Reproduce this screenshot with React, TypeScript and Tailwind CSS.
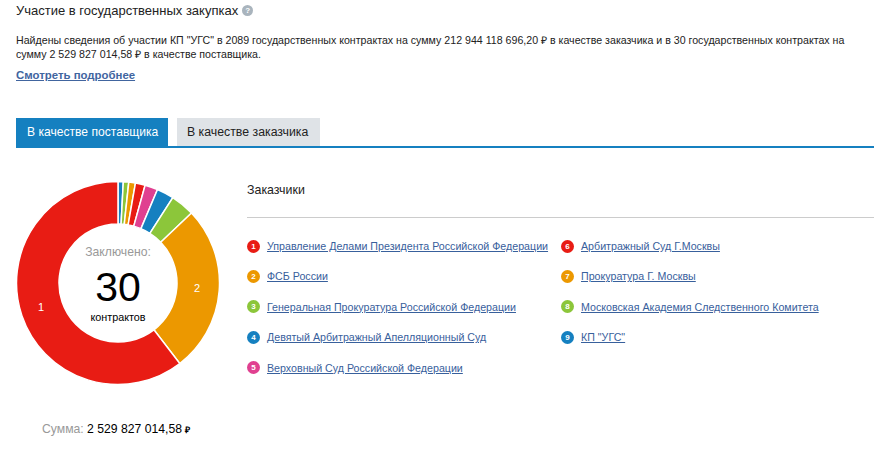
const buyers = [
  { n: 1, name: "Управление Делами Президента Российской Федерации", color: "bg-[#e81c14]" },
  { n: 2, name: "ФСБ России", color: "bg-[#ec9800]" },
  { n: 3, name: "Генеральная Прокуратура Российской Федерации", color: "bg-[#8cc63a]" },
  { n: 4, name: "Девятый Арбитражный Апелляционный Суд", color: "bg-[#1580c0]" },
  { n: 5, name: "Верховный Суд Российской Федерации", color: "bg-[#e04090]" },
];

const buyers2 = [
  { n: 6, name: "Арбитражный Суд Г.Москвы", color: "bg-[#e81c14]" },
  { n: 7, name: "Прокуратура Г. Москвы", color: "bg-[#ec9800]" },
  { n: 8, name: "Московская Академия Следственного Комитета", color: "bg-[#8cc63a]" },
  { n: 9, name: 'КП "УГС"', color: "bg-[#1580c0]" },
];

// start / end angle of each slice, clockwise from 12 o'clock
const slices = [
  { from: 0, to: 3, fill: "#1580c0" },
  { from: 3, to: 6.1, fill: "#8cc63a" },
  { from: 6.1, to: 9.9, fill: "#ec9800" },
  { from: 9.9, to: 15.5, fill: "#e81c14" },
  { from: 15.5, to: 22.9, fill: "#e04090" },
  { from: 22.9, to: 32.7, fill: "#1580c0" },
  { from: 32.7, to: 46.4, fill: "#8cc63a" },
  { from: 46.4, to: 142.5, fill: "#ec9800" },
  { from: 142.5, to: 360, fill: "#e81c14" },
];

function point(r: number, deg: number) {
  const a = (deg * Math.PI) / 180;
  return `${(r * Math.sin(a)).toFixed(2)} ${(-r * Math.cos(a)).toFixed(2)}`;
}

function slicePath(from: number, to: number) {
  const R = 101.5;
  const r = 59;
  const large = to - from > 180 ? 1 : 0;
  return `M${point(R, from)}A${R} ${R} 0 ${large} 1 ${point(R, to)}L${point(r, to)}A${r} ${r} 0 ${large} 0 ${point(r, from)}Z`;
}

function Donut() {
  return (
    <div className="relative w-[204px] h-[204px] shrink-0">
      <svg width="204" height="204" viewBox="-102 -102 204 204">
        {slices.map((s) => (
          <path key={s.from} d={slicePath(s.from, s.to)} fill={s.fill} stroke="#fff" strokeWidth="1.5" />
        ))}
      </svg>
      <span className="absolute left-[22px] top-[120px] text-[11px] leading-[13px] text-white">1</span>
      <span className="absolute left-[178px] top-[101px] text-[11px] leading-[13px] text-white">2</span>
      <div className="absolute inset-0 flex flex-col items-center">
        <span className="mt-[63px] text-[12.2px] leading-[16px] text-[#999]">Заключено:</span>
        <span className="mt-[4px] text-[41px] leading-[46px] text-black">30</span>
        <span className="mt-[1px] text-[10.8px] leading-[13px] text-black">контрактов</span>
      </div>
    </div>
  );
}

function Buyer({ n, name, color }: { n: number; name: string; color: string }) {
  return (
    <div className="flex items-center h-[14px] mb-[16.4px]">
      <span className={`w-[13px] h-[13px] rounded-full ${color} text-white text-[8px] font-bold leading-[13px] text-center shrink-0`}>
        {n}
      </span>
      <a href="#" className="ml-[7px] text-[10.67px] leading-[12px] text-[#38609c] underline whitespace-nowrap">
        {name}
      </a>
    </div>
  );
}

export default function App() {
  return (
    <div className="w-[880px] h-[456px] bg-white overflow-hidden pl-4 pr-[6px] font-['Liberation_Sans',Arial,sans-serif]">
      <div className="flex items-center h-[20px] mt-[0.5px]">
        <h2 className="text-[13px] leading-[20px] text-[#222]">Участие в государственных закупках</h2>
        <span className="ml-[4px] w-[11px] h-[11px] rounded-full bg-[#a9b4bd] text-white text-[8px] font-bold leading-[11px] text-center">?</span>
      </div>
      <p className="mt-[12px] text-[10.63px] leading-[14.5px] text-[#222] w-[850px]">
        Найдены сведения об участии КП "УГС" в 2089 государственных контрактах на сумму 212 944 118 696,20 ₽ в качестве заказчика и в 30 государственных контрактах на сумму 2 529 827 014,58 ₽ в качестве поставщика.
      </p>
      <a href="#" className="block mt-[6px] text-[11.4px] leading-[14px] font-bold text-[#41659f] underline">
        Смотреть подробнее
      </a>

      <div className="flex items-end mt-[36.5px] h-[30px] border-b-2 border-[#1580c0] w-[858px]">
        <div className="w-[152px] h-[28px] px-[11px] bg-[#1580c0] text-white text-[12.1px] leading-[28px] whitespace-nowrap">В качестве поставщика</div>
        <div className="ml-[9px] w-[143px] h-[28px] px-[10px] bg-[#dfe3e7] text-[#222] text-[12.3px] leading-[28px] whitespace-nowrap">В качестве заказчика</div>
      </div>

      <div className="flex mt-[33px]">
        <div className="w-[231px] shrink-0">
          <Donut />
          <div className="mt-[36px] ml-[26px] text-[12.2px] leading-[16px] text-black whitespace-nowrap">
            <span className="text-[#999]">Сумма:</span> 2 529 827 014,58 <span className="text-[9px] font-bold">₽</span>
          </div>
        </div>
        <div className="flex-1">
          <div className="text-[12.4px] leading-[16px] text-[#222] pt-px">Заказчики</div>
          <div className="mt-[19px] border-t border-[#ccc]" />
          <div className="flex mt-[21px]">
            <div className="w-[314px]">
              {buyers.map((b) => (
                <Buyer key={b.n} {...b} />
              ))}
            </div>
            <div>
              {buyers2.map((b) => (
                <Buyer key={b.n} {...b} />
              ))}
            </div>
          </div>
        </div>
      </div>
    </div>
  );
}
